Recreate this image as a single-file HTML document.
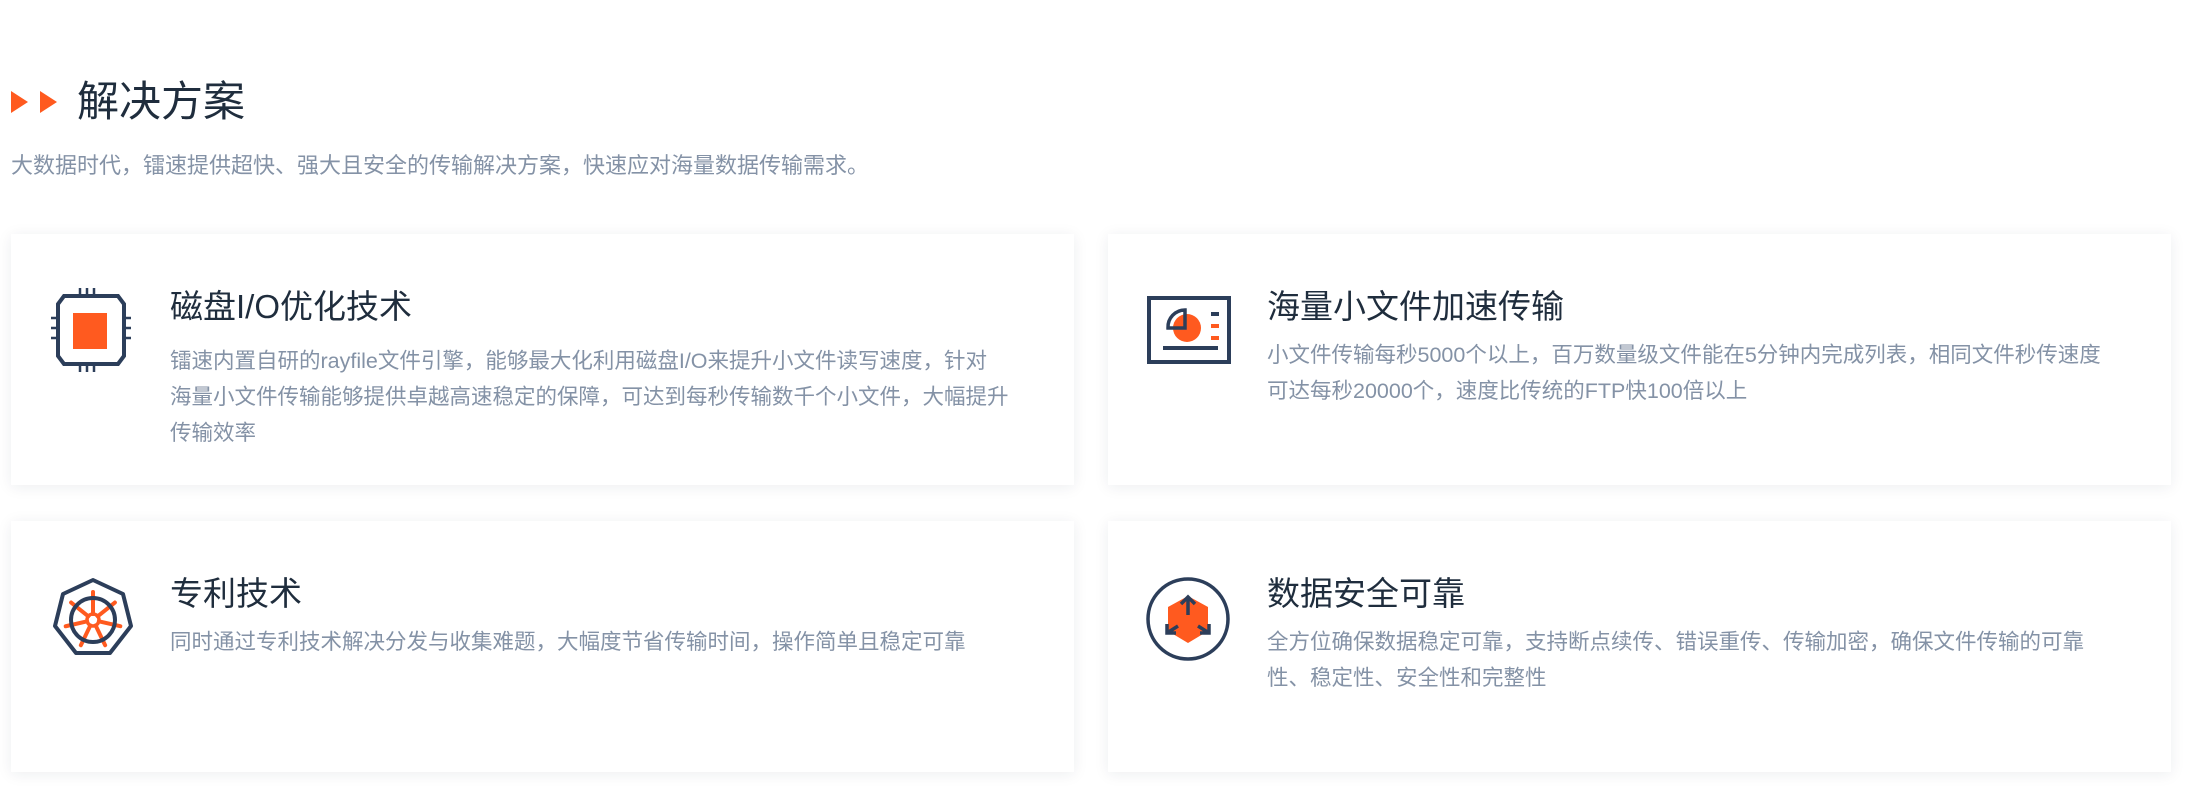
<!DOCTYPE html>
<html><head><meta charset="utf-8"><style>
*{margin:0;padding:0;box-sizing:border-box}
body{width:2197px;height:803px;background:#fff;font-family:"Liberation Sans","Noto Sans CJK SC",sans-serif;position:relative;overflow:hidden}
.h{position:absolute;left:77px;top:74px;font-size:42px;color:#1f2d3d;line-height:56px}
.arr{position:absolute;top:91px;width:0;height:0;border-top:11px solid transparent;border-bottom:11px solid transparent;border-left:17px solid #ff5a1f}
.sub{position:absolute;left:11px;top:151px;font-size:22px;color:#8492a6;line-height:30px;white-space:nowrap}
.card{position:absolute;width:1063px;height:251px;background:#fff;box-shadow:0 2px 14px rgba(30,40,60,0.08)}
.card svg{position:absolute}
.t{position:absolute;left:159px;top:53px;font-size:33px;color:#1f2d3d;line-height:40px;white-space:nowrap}
.d{position:absolute;left:159px;top:109px;font-size:21.5px;color:#8492a6;line-height:36px;white-space:nowrap}
</style></head><body>
<div class="arr" style="left:11px"></div><div class="arr" style="left:40px"></div>
<div class="h">解决方案</div>
<div class="sub">大数据时代，镭速提供超快、强大且安全的传输解决方案，快速应对海量数据传输需求。</div>

<div class="card" style="left:11px;top:234px">
<svg style="left:38px;top:54px" width="84" height="84" viewBox="0 0 84 84">
<path d="M15 8H69L75 16V68L69 76H15L9 68V16Z" fill="none" stroke="#2c3e5a" stroke-width="4"/>
<g stroke="#2c3e5a" stroke-width="2.5"><path d="M31 0V8M38 0V8M45 0V8M31 76V84M38 76V84M45 76V84M2 30H9M2 40H9M2 50H9M75 30H82M75 40H82M75 50H82"/></g>
<rect x="24" y="25" width="34" height="36" fill="#ff5a1f"/>
</svg>
<div class="t">磁盘I/O优化技术</div>
<div class="d">镭速内置自研的rayfile文件引擎，能够最大化利用磁盘I/O来提升小文件读写速度，针对<br>海量小文件传输能够提供卓越高速稳定的保障，可达到每秒传输数千个小文件，大幅提升<br>传输效率</div>
</div>

<div class="card" style="left:1108px;top:234px">
<svg style="left:39px;top:62px" width="84" height="68" viewBox="0 0 84 68">
<rect x="2" y="2" width="80" height="64" fill="none" stroke="#2c3e5a" stroke-width="4"/>
<circle cx="40" cy="32" r="14" fill="#ff5a1f"/>
<path d="M38 14V32H21A17 17 0 0 1 38 14Z" fill="none" stroke="#2c3e5a" stroke-width="3.5"/>
<rect x="16" y="50" width="55" height="4" fill="#2c3e5a"/>
<rect x="64" y="16" width="8" height="4" fill="#2c3e5a"/>
<rect x="64" y="28" width="8" height="4" fill="#ff5a1f"/>
<rect x="64" y="40" width="8" height="4" fill="#ff5a1f"/>
</svg>
<div class="t">海量小文件加速传输</div>
<div class="d" style="top:103px">小文件传输每秒5000个以上，百万数量级文件能在5分钟内完成列表，相同文件秒传速度<br>可达每秒20000个，速度比传统的FTP快100倍以上</div>
</div>

<div class="card" style="left:11px;top:521px">
<svg style="left:41px;top:56px" width="82" height="82" viewBox="0 0 82 82">
<path d="M41 3L71 17L79 49L58 76H24L3 49L11 17Z" fill="none" stroke="#2c3e5a" stroke-width="4" stroke-linejoin="round"/>
<g stroke="#ff5a1f" stroke-width="4" stroke-linecap="round" transform="translate(41,43)">
<path d="M0 -6V-28" transform="rotate(0)"/>
<path d="M0 -6V-28" transform="rotate(51.4)"/>
<path d="M0 -6V-28" transform="rotate(102.8)"/>
<path d="M0 -6V-28" transform="rotate(154.3)"/>
<path d="M0 -6V-28" transform="rotate(205.7)"/>
<path d="M0 -6V-28" transform="rotate(257.1)"/>
<path d="M0 -6V-28" transform="rotate(308.6)"/>
</g>
<circle cx="41" cy="43" r="22" fill="none" stroke="#2c3e5a" stroke-width="4"/>
<circle cx="41" cy="43" r="6" fill="none" stroke="#ff5a1f" stroke-width="3.5"/>
</svg>
<div class="t">专利技术</div>
<div class="d" style="top:103px">同时通过专利技术解决分发与收集难题，大幅度节省传输时间，操作简单且稳定可靠</div>
</div>

<div class="card" style="left:1108px;top:521px">
<svg style="left:38px;top:56px" width="84" height="84" viewBox="0 0 84 84">
<circle cx="42" cy="42" r="40" fill="none" stroke="#2c3e5a" stroke-width="3.5"/>
<path d="M42 19L62 30V54L42 66L22 54V30Z" fill="#ff5a1f"/>
<g fill="none" stroke="#2c3e5a" stroke-width="3.5"><path d="M42 20V38M35 27L42 20L49 27M21 56L32 49M21 47V56H30M63 56L52 49M63 47V56H54"/></g>
</svg>
<div class="t">数据安全可靠</div>
<div class="d" style="top:103px">全方位确保数据稳定可靠，支持断点续传、错误重传、传输加密，确保文件传输的可靠<br>性、稳定性、安全性和完整性</div>
</div>
</body></html>
